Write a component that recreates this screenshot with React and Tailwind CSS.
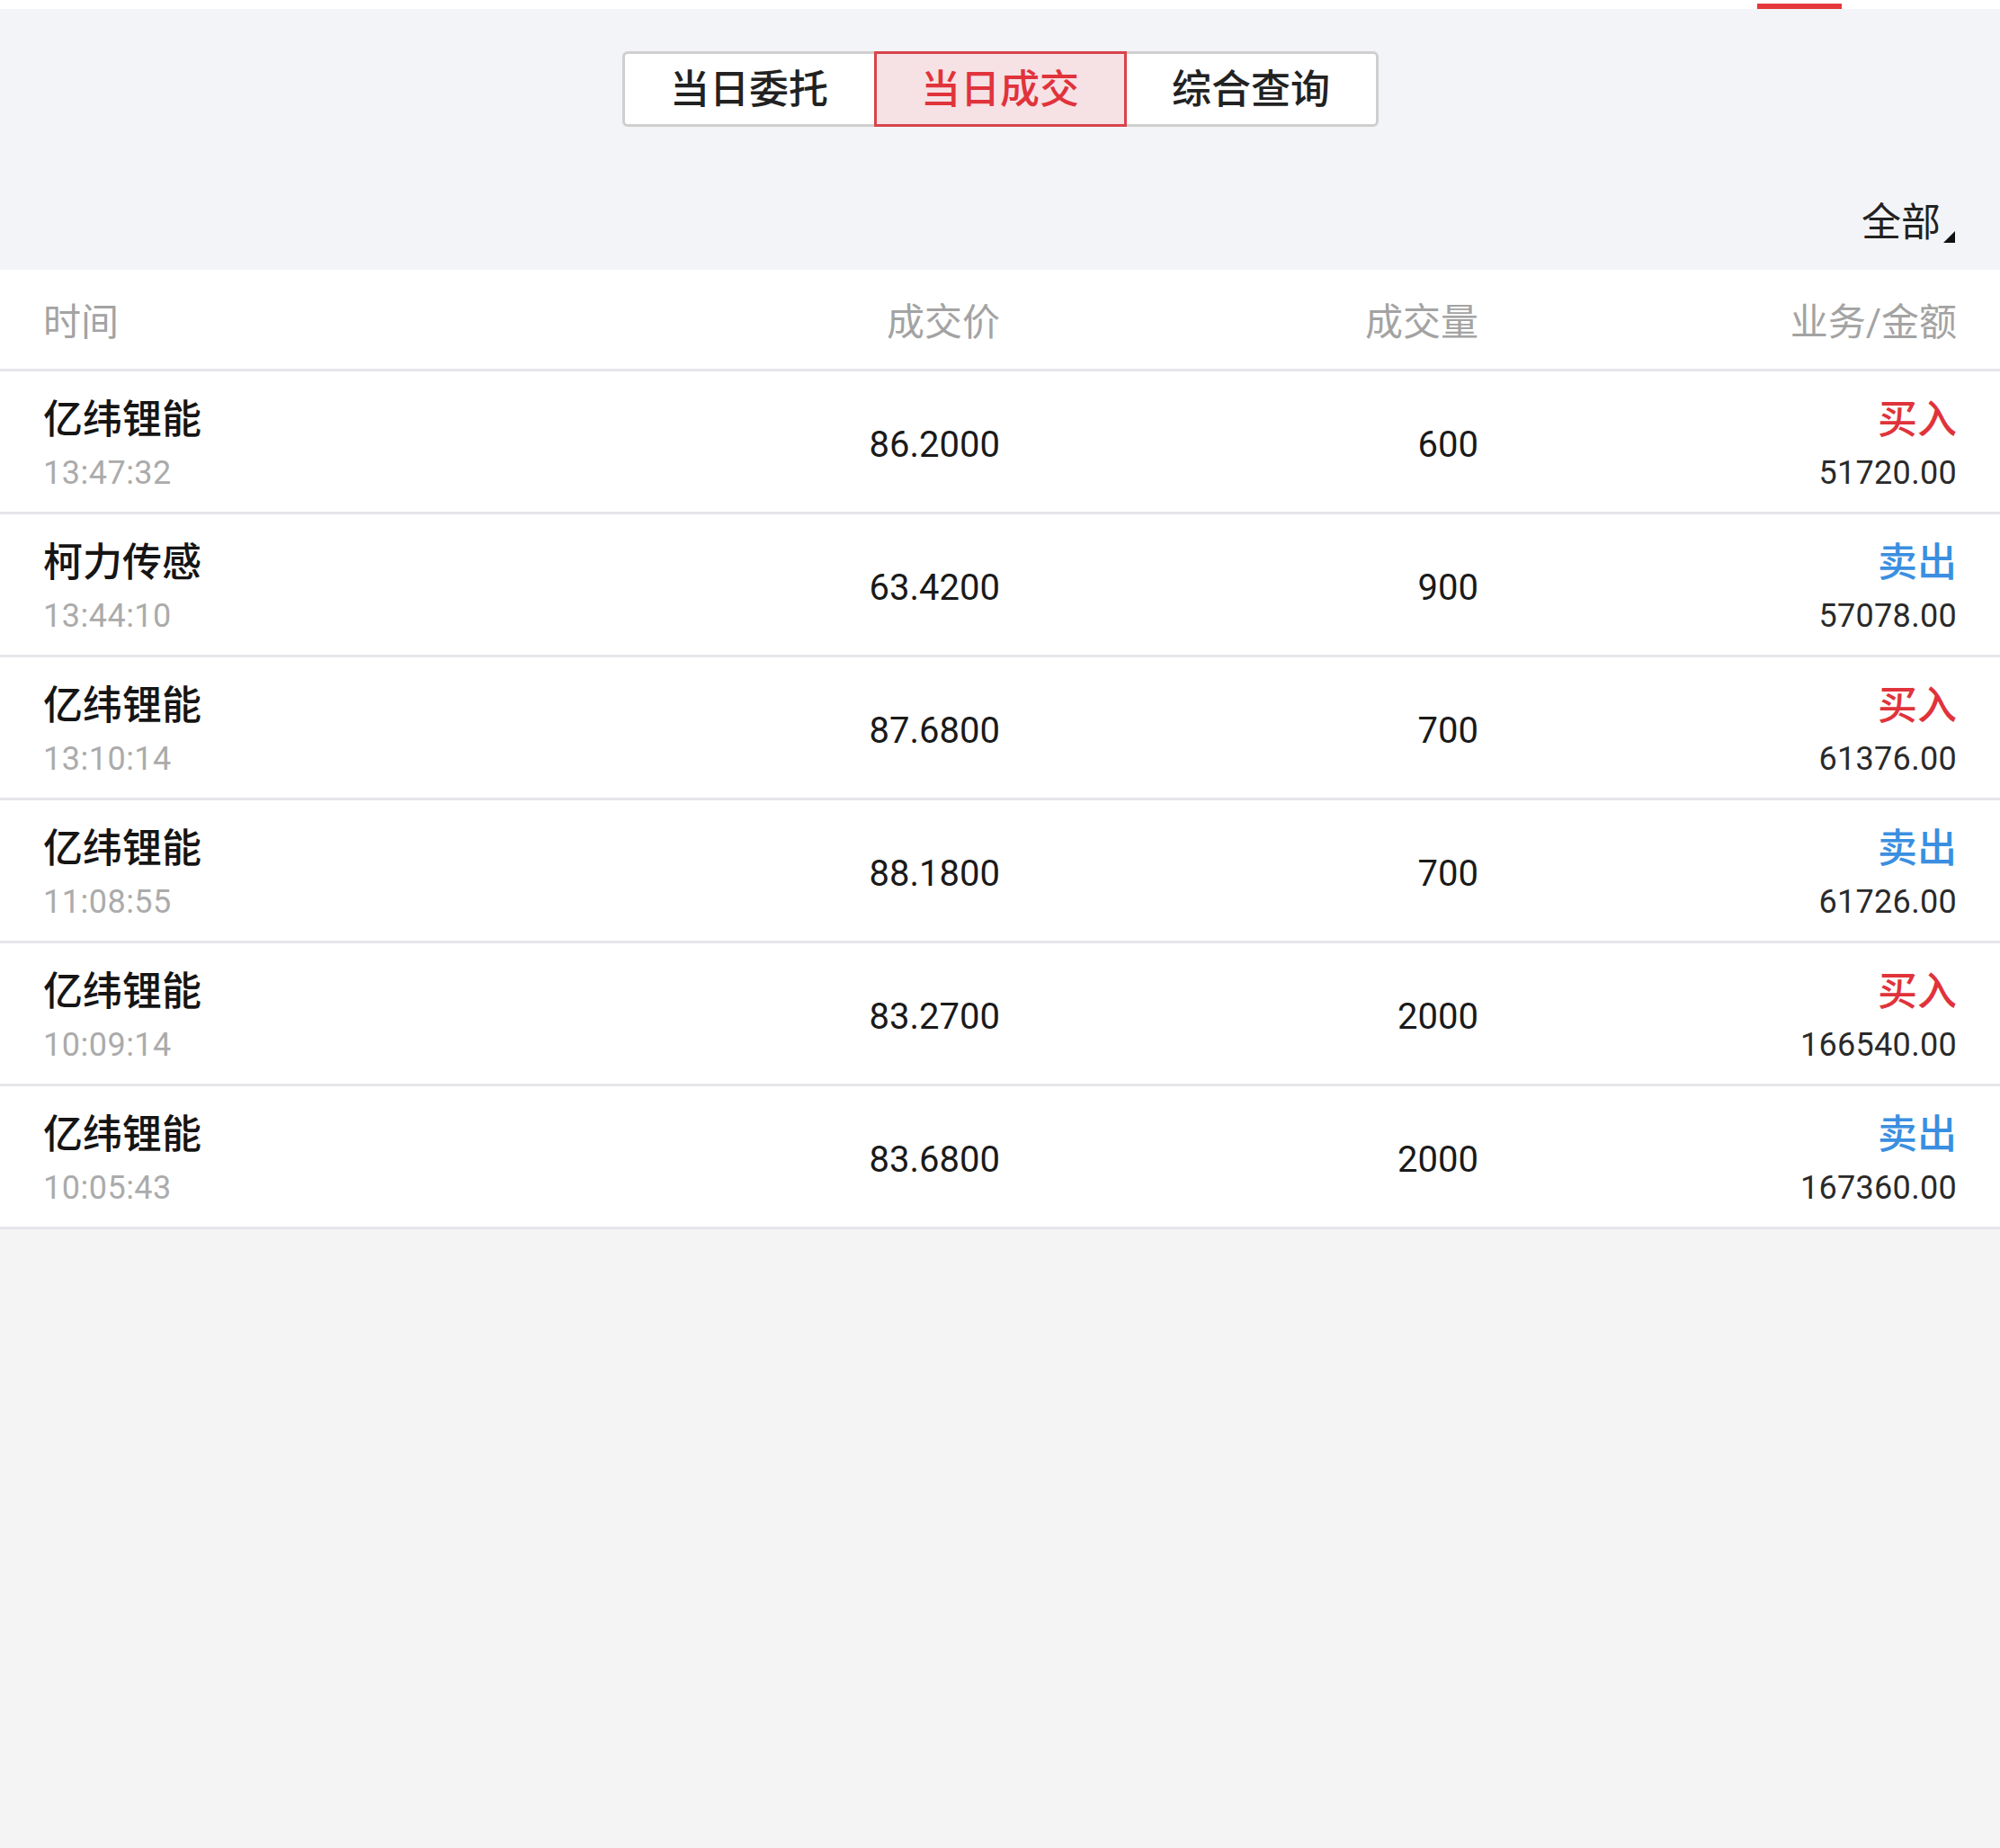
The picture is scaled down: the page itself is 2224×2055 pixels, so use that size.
import React from "react";

const rows = [
  { name: "亿纬锂能", time: "13:47:32", price: "86.2000", vol: "600", side: "买入", amt: "51720.00" },
  { name: "柯力传感", time: "13:44:10", price: "63.4200", vol: "900", side: "卖出", amt: "57078.00" },
  { name: "亿纬锂能", time: "13:10:14", price: "87.6800", vol: "700", side: "买入", amt: "61376.00" },
  { name: "亿纬锂能", time: "11:08:55", price: "88.1800", vol: "700", side: "卖出", amt: "61726.00" },
  { name: "亿纬锂能", time: "10:09:14", price: "83.2700", vol: "2000", side: "买入", amt: "166540.00" },
  { name: "亿纬锂能", time: "10:05:43", price: "83.6800", vol: "2000", side: "卖出", amt: "167360.00" },
];

export default function App() {
  return (
    <div
      className="w-[2224px] min-h-[2055px] bg-[#f4f4f5] flex flex-col"
      style={{ fontFamily: "Roboto, 'Noto Sans CJK SC', sans-serif" }}
    >
      {/* top strip */}
      <div className="h-[10px] bg-white flex justify-end pr-[176px] pt-[4px]">
        <div className="h-[6px] w-[94px] bg-[#e5383d]" />
      </div>

      {/* header area */}
      <div className="h-[290px] bg-[#f3f4f8] flex flex-col">
        <div className="pt-[47px] flex justify-center">
          <div className="flex h-[84px]">
            <div className="w-[280px] h-full bg-white border-[3px] border-r-0 border-[#cfcfcf] rounded-l-[6px] flex items-center justify-center pt-[2px] text-[44px] font-medium text-[#222] leading-none">
              当日委托
            </div>
            <div className="w-[281px] h-full bg-[#f6e1e5] border-[3px] border-[#d9434b] flex items-center justify-center pt-[2px] text-[44px] font-medium text-[#e0333b] leading-none">
              当日成交
            </div>
            <div className="w-[280px] h-full bg-white border-[3px] border-l-0 border-[#cfcfcf] rounded-r-[6px] flex items-center justify-center pt-[2px] text-[44px] font-medium text-[#222] leading-none">
              综合查询
            </div>
          </div>
        </div>
        <div className="mt-[77px] h-[60px] flex justify-end items-center pr-[50px]">
          <span className="text-[44px] leading-[60px] text-[#222]">全部</span>
          <svg width="13" height="13" viewBox="0 0 13 13" className="self-end mb-[8px] ml-[3px]">
            <polygon points="13,0 13,13 0,13" fill="#111" />
          </svg>
        </div>
      </div>

      {/* table header */}
      <div className="bg-white h-[113px] border-b-[3px] border-[#e6e6ea] grid grid-cols-4 px-[48px] items-center pt-[6px] text-[42px] text-[#a3a3a3]">
        <div>时间</div>
        <div className="text-right">成交价</div>
        <div className="text-right">成交量</div>
        <div className="text-right">业务/金额</div>
      </div>

      {/* rows */}
      {rows.map((r, i) => (
        <div
          key={i}
          className="bg-white h-[159px] border-b-[3px] border-[#e6e6ea] grid grid-cols-4 px-[48px] items-center"
        >
          <div className="flex flex-col pt-[10px]">
            <div className="text-[44px] leading-[60px] font-medium text-[#151515]">{r.name}</div>
            <div className="text-[36px] leading-[58px] text-[#ababab] tracking-[0.5px]">{r.time}</div>
          </div>
          <div className="text-right text-[40px] leading-[60px] pt-[8px] text-[#1a1a1a]">{r.price}</div>
          <div className="text-right text-[40px] leading-[60px] pt-[8px] text-[#1a1a1a]">{r.vol}</div>
          <div className="flex flex-col items-end pt-[10px]">
            <div
              className={
                r.side === "买入"
                  ? "text-[44px] leading-[60px] font-medium text-[#e0333b]"
                  : "text-[44px] leading-[60px] font-medium text-[#3b8fe0]"
              }
            >
              {r.side}
            </div>
            <div className="text-[36px] leading-[58px] text-[#2a2a2a] tracking-[0.3px]">{r.amt}</div>
          </div>
        </div>
      ))}

      <div className="flex-1 bg-[#f4f4f5]" />
    </div>
  );
}
